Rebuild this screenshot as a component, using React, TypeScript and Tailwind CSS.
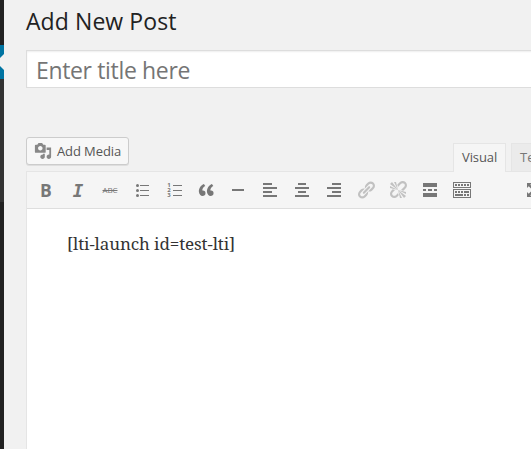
import React from "react";

const LINK =
  "M17.74 2.76c1.68 1.69 1.68 4.41 0 6.1l-1.53 1.52c-1.12 1.12-2.7 1.47-4.14 1.09l2.62-2.61.76-.77.76-.76c.84-.84.84-2.2 0-3.04-.84-.85-2.2-.85-3.04 0l-.77.76-3.38 3.38c-.37-1.44-.02-3.02 1.1-4.14l1.52-1.53c1.69-1.68 4.42-1.68 6.1 0zM8.59 13.43l5.34-5.34c.42-.42.42-1.1 0-1.52-.44-.43-1.13-.39-1.53 0l-5.33 5.34c-.42.42-.42 1.1 0 1.52.44.43 1.13.39 1.52 0zm-.76 2.29l4.14-4.15c.38 1.44.03 3.02-1.09 4.14l-1.52 1.53c-1.69 1.68-4.41 1.68-6.1 0-1.68-1.68-1.68-4.42 0-6.1l1.53-1.52c1.12-1.12 2.7-1.47 4.14-1.1l-4.14 4.15c-.85.84-.85 2.2 0 3.05.84.84 2.2.84 3.04 0z";
const UNLINK =
  "M17.74 2.26c1.68 1.69 1.68 4.41 0 6.1l-1.53 1.52c-.32.33-.69.58-1.08.77L13 10l1.69-1.64.76-.77.76-.76c.84-.84.84-2.2 0-3.04-.84-.85-2.2-.85-3.04 0l-.77.76-.76.76L10 7l-.65-2.14c.19-.38.44-.75.77-1.07l1.52-1.53c1.69-1.68 4.42-1.68 6.1 0zM2 4l8 6-6-8zm4-2l4 8-2-8H6zM2 6l8 4-8-2V6zm7.36 7.69L10 13l.74 2.35-1.38 1.39c-1.69 1.68-4.41 1.68-6.1 0-1.68-1.68-1.68-4.42 0-6.1l1.39-1.38L7 10l-.69.64-1.52 1.53c-.85.84-.85 2.2 0 3.04.84.85 2.2.85 3.04 0zM18 16l-8-6 6 8zm-4 2l-4-8 2 8h2zm4-4l-8-4 8 2v2z";
const QUOTE =
  "M9.49 13.22c0-.74-.2-1.38-.61-1.9-.62-.78-1.83-.88-2.53-.72-.29-1.65 1.11-3.75 2.92-4.65L7.88 4c-2.73 1.3-5.42 4.28-4.96 8.05C3.21 14.43 4.59 16 6.54 16c.85 0 1.56-.25 2.12-.75s.83-1.18.83-2.03zm8.05 0c0-.74-.2-1.38-.61-1.9-.63-.78-1.83-.88-2.53-.72-.29-1.65 1.11-3.75 2.92-4.65L15.93 4c-2.73 1.3-5.41 4.28-4.95 8.05.28 2.38 1.66 3.95 3.61 3.95.85 0 1.56-.25 2.12-.75s.83-1.18.83-2.03z";
const MEDIA =
  "M13 11V4c0-.55-.45-1-1-1h-1.67L9 1H5L3.67 3H2c-.55 0-1 .45-1 1v7c0 .55.45 1 1 1h10c.55 0 1-.45 1-1zM7 4.5c1.38 0 2.5 1.12 2.5 2.5S8.38 9.5 7 9.5 4.5 8.38 4.5 7 5.62 4.5 7 4.5zM14 6h5v10.5c0 1.38-1.12 2.5-2.5 2.5S14 17.88 14 16.5s1.12-2.5 2.5-2.5c.17 0 .34.02.5.05V9h-3V6zm-4 8.05V13h2v3.5c0 1.38-1.12 2.5-2.5 2.5S7 17.88 7 16.5 8.12 14 9.5 14c.17 0 .34.02.5.05z";

function Tool({ children, muted = false }: { children: React.ReactNode; muted?: boolean }) {
  return (
    <button className={`flex h-9 w-8 shrink-0 items-center justify-center ${muted ? "text-[#c1c1c1]" : "text-[#777]"}`}>
      {children}
    </button>
  );
}

function Icon({ children }: { children: React.ReactNode }) {
  return (
    <svg viewBox="0 0 20 20" className="size-5 shrink-0" fill="currentColor">
      {children}
    </svg>
  );
}

function Toolbar() {
  return (
    <div className="flex h-[37px] w-[540px] border-b border-[#dedede] bg-[#f5f5f5] pl-[3px]">
      <Tool><span className="pb-px text-[17.5px] leading-5 font-bold">B</span></Tool>
      <Tool><span className="pt-px font-['DejaVu_Sans_Mono',monospace] text-[17.5px] leading-5 font-bold italic">I</span></Tool>
      <Tool><span className="text-[8px] leading-5 tracking-[-0.1px] line-through">ABC</span></Tool>
      <Tool>
        <Icon>
          <circle cx="5.5" cy="5.5" r="1.5" /><circle cx="5.5" cy="10.5" r="1.5" /><circle cx="5.5" cy="15.5" r="1.5" />
          <path d="M8 5h9v1H8zM8 10h9v1H8zM8 15h9v1H8z" />
        </Icon>
      </Tool>
      <Tool>
        <span className="-mr-px flex w-[5px] flex-col pt-px text-[6px] leading-[5px] font-bold"><span>1</span><span>2</span><span>3</span></span>
        <svg viewBox="0 0 11 20" className="h-5 w-[11px]" fill="currentColor"><path d="M2 5h9v1H2zM2 10h9v1H2zM2 15h9v1H2z" /></svg>
      </Tool>
      <Tool><Icon><path d={QUOTE} /></Icon></Tool>
      <Tool><Icon><path d="M4 9h12v2H4z" /></Icon></Tool>
      <Tool><Icon><path d="M3 3h9v2H3zM3 7h14v2H3zM3 11h9v2H3zM3 15h14v2H3z" /></Icon></Tool>
      <Tool><Icon><path d="M6 3h8v2H6zM3 7h14v2H3zM6 11h8v2H6zM3 15h14v2H3z" /></Icon></Tool>
      <Tool><Icon><path d="M8 3h9v2H8zM3 7h14v2H3zM8 11h9v2H8zM3 15h14v2H3z" /></Icon></Tool>
      <Tool muted><Icon><path d={LINK} /></Icon></Tool>
      <Tool muted><Icon><path d={UNLINK} /></Icon></Tool>
      <Tool><Icon><path d="M3 3h14v4H3zM3 9h3v2H3zM8 9h4v2H8zM14 9h3v2h-3zM3 13h14v4H3z" /></Icon></Tool>
      <Tool>
        <Icon>
          <path fillRule="evenodd" d="M1 2h18v6H1zM2 3v4h16V3zM1 9h18v9H1zM2 10v7h16v-7z" />
          <path d="M3 4h2v2H3zM6 4h2v2H6zM9 4h2v2H9zM12 4h2v2h-2zM15 4h2v2h-2zM3 11h2v2H3zM6 11h2v2H6zM9 11h2v2H9zM12 11h5v2h-5zM3 14h8v2H3zM12 14h2v2h-2zM15 14h2v2h-2z" />
        </Icon>
      </Tool>
      <div className="ml-[46px] flex h-9 items-center text-[#777]">
        <Icon><path d="M3 3h5L6.3 4.7 9 7.4 7.4 9 4.7 6.3 3 8zM3 17h5l-1.7-1.7L9 12.6 7.4 11l-2.7 2.7L3 12z" /></Icon>
      </div>
    </div>
  );
}

export default function App() {
  return (
    <div className="flex h-[449px] w-[531px] overflow-hidden bg-[#f1f1f1] font-['Open_Sans',sans-serif]">
      <aside className="flex w-1 shrink-0 flex-col bg-[#222]">
        <div className="mt-[45px] h-[34px] bg-[#0074a2]">
          <svg viewBox="0 0 4 34" className="h-[34px] w-1" fill="#f1f1f1"><path d="M4 9v16L0 21v-8z" /></svg>
        </div>
        <div className="h-[123px] bg-[#333]" />
      </aside>
      <main className="w-[527px] shrink-0 overflow-hidden pl-[22px]">
        <h1 className="h-[50px] pt-[6px] text-[23px] leading-[31px] tracking-[0.08px] text-[#222]">Add New Post</h1>
        <div className="flex h-[38px] w-[540px] items-center border border-[#ddd] bg-white pl-[9px] shadow-[inset_0_1px_2px_rgba(0,0,0,0.07)]">
          <span className="pt-px text-[23px] leading-8 tracking-[-0.35px] text-[#757575]">Enter title here</span>
        </div>
        <div className="flex h-[83px] items-end">
          <button className="mb-[6px] flex h-7 w-[103px] shrink-0 items-center rounded-[3px] border border-[#ccc] bg-[#f7f7f7] pl-[7px] text-[13px] text-[#555] shadow-[0_1px_0_rgba(0,0,0,0.08)]">
            <svg viewBox="0 0 20 20" className="mr-[5px] size-[18px] shrink-0" fill="#888"><path d={MEDIA} /></svg>
            <span className="pt-px tracking-[-0.1px] whitespace-nowrap">Add Media</span>
          </button>
          <div className="z-10 -mb-px ml-[324px] flex shrink-0 gap-[5px]">
            <div className="h-[29px] w-[53px] border border-b-0 border-[#e5e5e5] bg-[#f5f5f5] pt-[4px] pl-2 text-[13px] leading-[19px] tracking-[-0.1px] text-[#555]">Visual</div>
            <div className="h-7 w-[50px] border border-b-0 border-[#e5e5e5] bg-[#ebebeb] pt-[4px] pl-2 text-[13px] leading-[19px] text-[#777]">Text</div>
          </div>
        </div>
        <div className="h-[290px] w-[542px] border border-[#e5e5e5] bg-white">
          <Toolbar />
          <p className="pt-[23px] pl-10 font-['Noto_Serif','DejaVu_Serif_Condensed','DejaVu_Serif',serif] text-[17px] leading-6 tracking-[-0.1px] whitespace-nowrap text-[#333]">[lti-launch id=test-lti]</p>
        </div>
      </main>
    </div>
  );
}
